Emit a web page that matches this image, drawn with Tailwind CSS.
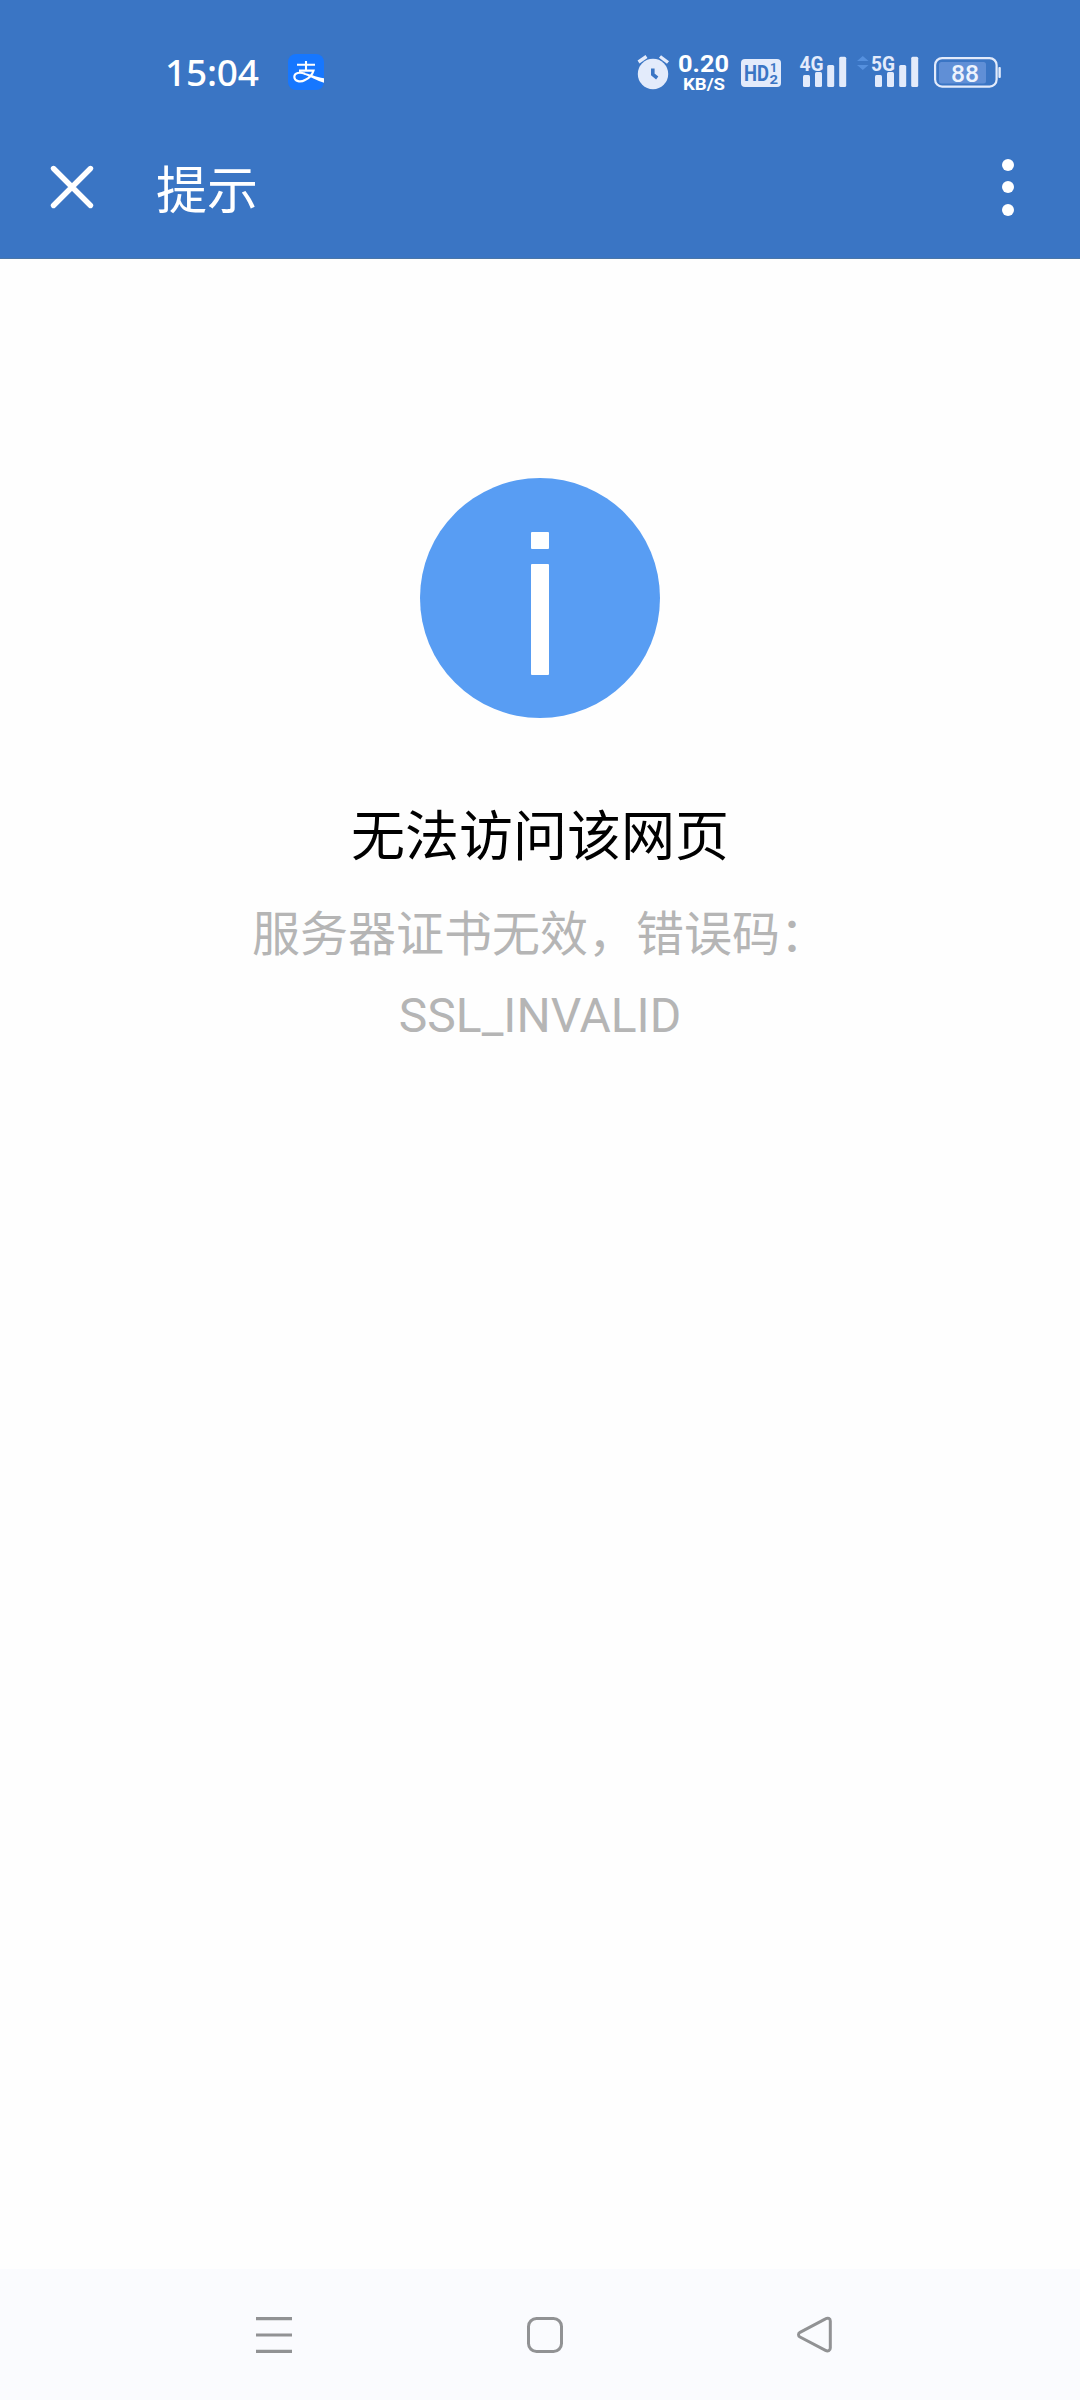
<!DOCTYPE html>
<html lang="zh-CN">
<head>
    <meta charset="UTF-8">
    <meta name="viewport" content="width=device-width, initial-scale=1.0">
    <title>提示</title>
    <script src="https://cdn.jsdelivr.net/npm/@tailwindcss/browser@4"></script>
</head>
<body class="w-[1080px] h-[2400px] flex flex-col overflow-hidden bg-[#fefefe] font-['Roboto','Noto_Sans_CJK_SC',sans-serif]">

    <!-- 顶部 -->
    <header class="h-[259px] shrink-0 bg-[#3a75c4] border-b border-[#4a76a8] text-white">

        <!-- 状态栏 -->
        <div class="h-[115px] pt-[50px] pl-[164px] pr-[76px] flex justify-between items-start">
            <div class="flex">
                <svg class="w-[124px] h-11 overflow-visible" viewBox="0 0 124 44" fill="#fff">
                    <text x="1" y="36" font-family="Noto Sans" font-size="37" font-weight="500" textLength="94">15:04</text>
                </svg>
                <!-- 支付宝 -->
                <svg class="w-9 h-9 mt-1" viewBox="0 0 36 36" fill="none" stroke="#fff">
                    <rect width="36" height="36" rx="8" fill="#1677ff" stroke="none"/>
                    <path d="M9 10.8H27M18 7V16.5M11 16.6H25.5C24.5 20 21 24.2 17 26C12.5 28.5 6.5 27.5 6.3 23C6.2 18.5 12 17.8 17 19.8" stroke-width="2.1"/>
                    <path d="M16 18.8C20 19.6 28 23 36 24.3V28.8C29 27 23 23 16 20.6Z" fill="#fff" stroke="none"/>
                </svg>
            </div>

            <div class="flex">
                <!-- 闹钟 -->
                <svg class="w-[42px] h-11" viewBox="636 50 42 44" fill="none" stroke="#e3ebfb">
                    <circle cx="653" cy="74" r="15.2" fill="#e3ebfb" stroke="none"/>
                    <path d="M638.5 62L646.5 56.5M660 56.5L668 62.5" stroke-width="3.4"/>
                    <path d="M652.8 68.5V74.5L657.2 78" stroke="#3a75c4" stroke-width="3.6"/>
                </svg>
                <!-- 网速 -->
                <svg class="w-[60px] h-11 overflow-visible" viewBox="678 50 60 44" fill="#fff" font-family="Roboto" font-weight="700">
                    <text x="678" y="72.3" font-size="24.5" textLength="51" lengthAdjust="spacingAndGlyphs">0.20</text>
                    <text x="683" y="90" font-size="17" textLength="42" lengthAdjust="spacingAndGlyphs">KB/S</text>
                </svg>
                <!-- HD -->
                <svg class="w-[60px] h-11 overflow-visible" viewBox="738 50 60 44" fill="#3a75c4" font-family="Roboto" font-weight="700">
                    <rect x="741" y="59" width="40" height="28" rx="4" fill="#e3ebfb"/>
                    <text x="744" y="81" font-size="22" textLength="25" lengthAdjust="spacingAndGlyphs">HD</text>
                    <text x="770" y="72" font-size="12.5">1</text>
                    <text x="769.5" y="84" font-size="12.5" textLength="8.5" lengthAdjust="spacingAndGlyphs">2</text>
                </svg>
                <!-- 4G 信号 -->
                <svg class="w-14 h-11" viewBox="798 50 56 44" fill="#e3ebfb">
                    <text x="799.5" y="70.7" font-family="Roboto" font-size="21" font-weight="700" textLength="24" lengthAdjust="spacingAndGlyphs">4G</text>
                    <rect x="803" y="75" width="7" height="12" rx="1.5"/>
                    <rect x="815" y="72" width="7" height="15" rx="1.5"/>
                    <rect x="827.2" y="65" width="7" height="22" rx="1.5"/>
                    <rect x="839.2" y="56.7" width="7" height="30.3" rx="1.5"/>
                </svg>
                <!-- 5G 信号 -->
                <svg class="w-[76px] h-11" viewBox="854 50 76 44" fill="#e3ebfb">
                    <path d="M857 61L862.8 56L868.6 61ZM857 65L862.8 70L868.6 65Z" fill="#5590de"/>
                    <text x="871" y="70.7" font-family="Roboto" font-size="21" font-weight="700" textLength="24" lengthAdjust="spacingAndGlyphs">5G</text>
                    <rect x="875" y="75" width="7" height="12" rx="1.5"/>
                    <rect x="887" y="72" width="7" height="15" rx="1.5"/>
                    <rect x="899.2" y="65" width="7" height="22" rx="1.5"/>
                    <rect x="911.2" y="56.7" width="7" height="30.3" rx="1.5"/>
                </svg>
                <!-- 电池 -->
                <svg class="w-[74px] h-11" viewBox="930 50 74 44">
                    <rect x="935.1" y="58.1" width="61.5" height="28.5" rx="7" fill="none" stroke="#e3ebfb" stroke-width="2.2"/>
                    <rect x="939" y="62" width="47" height="21.5" rx="2.5" fill="#608fd6"/>
                    <rect x="998.4" y="67" width="2.4" height="11" rx="1" fill="#e3ebfb"/>
                    <text x="951" y="81.5" font-family="Roboto" font-size="24.5" font-weight="500" fill="#edf3fd" textLength="28" lengthAdjust="spacingAndGlyphs">88</text>
                </svg>
            </div>
        </div>

        <!-- 标题栏 -->
        <div class="h-36 pl-12 pr-[66px] flex items-center">
            <svg class="w-12 h-12" viewBox="0 0 48 48" fill="none" stroke="#fff" stroke-width="5.4" stroke-linecap="round">
                <path d="M5.5 5.5L42.5 42.5M42.5 5.5L5.5 42.5"/>
            </svg>
            <h1 class="ml-[60px] mt-2.5 text-[51px] leading-[60px] grow">提示</h1>
            <div class="flex flex-col gap-[10.5px]">
                <span class="w-3 h-3 rounded-full bg-white"></span>
                <span class="w-3 h-3 rounded-full bg-white"></span>
                <span class="w-3 h-3 rounded-full bg-white"></span>
            </div>
        </div>
    </header>

    <!-- 错误提示 -->
    <main class="grow pt-[219px] flex flex-col items-center text-center">
        <div class="w-60 h-60 pt-[54px] rounded-full bg-[#589df3] flex flex-col items-center">
            <span class="w-[18px] h-[17px] rounded-[1px] bg-white"></span>
            <span class="mt-[15px] w-[18px] h-[111px] rounded-[1px] bg-white"></span>
        </div>
        <h2 class="mt-[80px] text-[54px] leading-[80px] text-black">无法访问该网页</h2>
        <p class="mt-4 w-[600px] text-[48px] leading-[81px] text-[#b5b5b5]">服务器证书无效，错误码：<br>SSL_INVALID</p>
    </main>

    <!-- 导航栏 -->
    <nav class="h-[131px] shrink-0 pl-[254px] pr-[245px] pt-px bg-[#fafbfe] flex justify-between items-center">
        <svg class="w-10 h-10" viewBox="0 0 40 40" fill="none" stroke="#919294" stroke-width="3.2">
            <path d="M2 3.6H38M2 20H38M2 36.3H38"/>
        </svg>
        <svg class="w-10 h-10" viewBox="0 0 40 40" fill="none" stroke="#919294" stroke-width="3">
            <rect x="3.5" y="3.5" width="33" height="33" rx="8"/>
        </svg>
        <svg class="w-10 h-10" viewBox="0 0 40 40" fill="none" stroke="#919294" stroke-width="3">
            <path d="M30.5 3.8C33 2.4 35.3 3.5 35.3 6V33C35.3 35.5 33 36.7 30.5 35.4L5 22C3 20.8 3 18.5 5 17.3Z" stroke-linejoin="round"/>
        </svg>
    </nav>

</body>
</html>
